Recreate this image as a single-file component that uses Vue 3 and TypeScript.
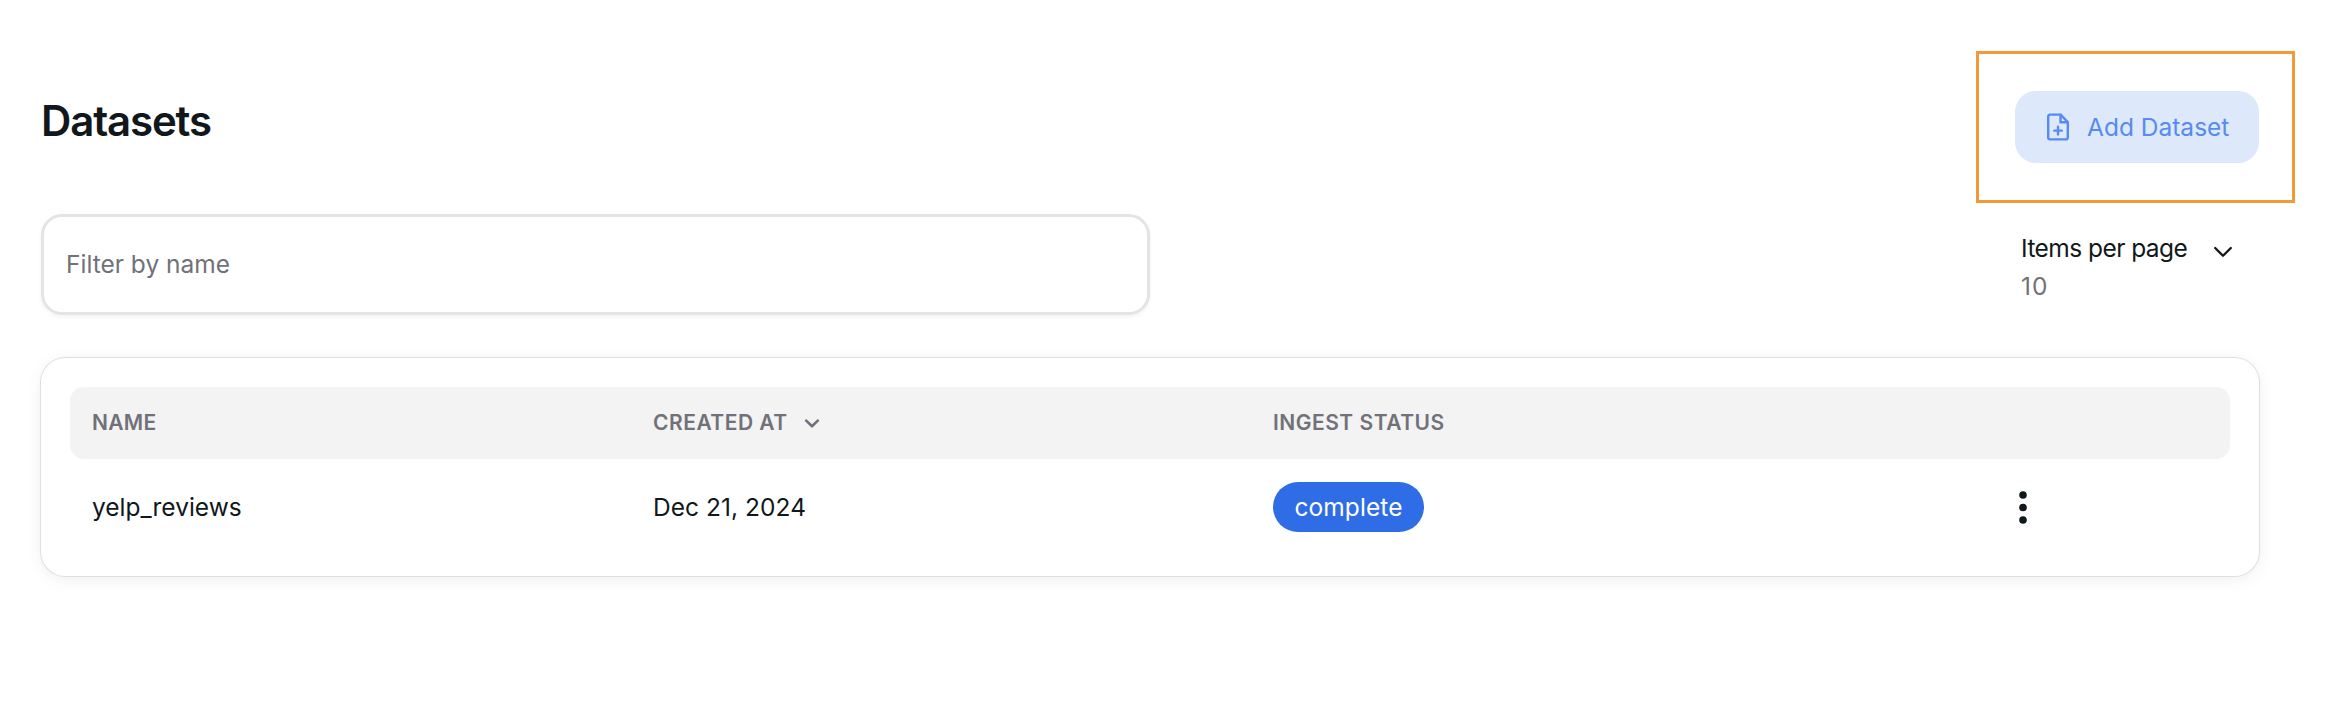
<script setup lang="ts">
import { ref } from 'vue'

interface Dataset {
  name: string
  createdAt: string
  status: string
}

const filter = ref('')
const perPage = ref(10)
const datasets: Dataset[] = [
  { name: 'yelp_reviews', createdAt: 'Dec 21, 2024', status: 'complete' },
]
</script>

<template>
  <main class="page">
    <header class="top">
      <h1 class="title">Datasets</h1>
      <div class="action">
        <button class="add" type="button">
          <svg class="add-icon" viewBox="0 0 24 28" fill="none" stroke="currentColor" stroke-width="2.4" stroke-linejoin="round" stroke-linecap="round">
            <path d="M4 1.6H14.5L21.8 9.2v15.4a1.8 1.8 0 0 1-1.8 1.8H4a1.8 1.8 0 0 1-1.8-1.8V3.4A1.8 1.8 0 0 1 4 1.6Z" />
            <path d="M14.5 1.6v7.6h7.3" />
            <path d="M12 13.8v7.6M8.2 17.6h7.6" />
          </svg>
          <span>Add Dataset</span>
        </button>
        <div class="highlight"></div>
      </div>
    </header>

    <div class="toolbar">
      <input v-model="filter" class="filter" type="text" placeholder="Filter by name" />
      <button class="per-page" type="button">
        <span class="per-page-text">
          <span class="label">Items per page</span>
          <span class="value">{{ perPage }}</span>
        </span>
        <svg class="chevron" viewBox="0 0 20 12" fill="none" stroke="currentColor" stroke-width="2.3" stroke-linecap="round" stroke-linejoin="round">
          <path d="M2.2 2 10 9.8 17.8 2" />
        </svg>
      </button>
    </div>

    <section class="card">
      <div class="row head">
        <span class="name">NAME</span>
        <span class="sortable">
          <span>CREATED AT</span>
          <svg class="sort" viewBox="0 0 16 12" fill="none" stroke="currentColor" stroke-width="2.6" stroke-linecap="round" stroke-linejoin="round">
            <path d="M2.2 4.6 8 10.2 13.8 4.6" />
          </svg>
        </span>
        <span>INGEST STATUS</span>
        <span></span>
      </div>
      <div v-for="item in datasets" :key="item.name" class="row body">
        <span>{{ item.name }}</span>
        <span class="date">{{ item.createdAt }}</span>
        <span><span class="chip">{{ item.status }}</span></span>
        <svg class="dots" viewBox="0 0 8 34" fill="currentColor">
          <circle cx="4" cy="5" r="3.8" />
          <circle cx="4" cy="17.5" r="3.8" />
          <circle cx="4" cy="30" r="3.8" />
        </svg>
      </div>
    </section>
  </main>
</template>

<style>
body {
  background: #fff;
}
</style>

<style scoped>
.page {
  box-sizing: border-box;
  height: 704px;
  padding: 91px 69px 0 41px;
  font-family: Inter, sans-serif;
  font-size: 24.5px;
  font-weight: 430;
  color: #11181c;
}

.top {
  display: flex;
  justify-content: space-between;
  align-items: flex-start;
  height: 123px;
}

.title {
  margin: 0;
  font-size: 42px;
  line-height: 60px;
  font-weight: 600;
  letter-spacing: -1.15px;
}

.action {
  position: relative;
}

.add {
  display: flex;
  align-items: center;
  gap: 17px;
  box-sizing: border-box;
  width: 244px;
  height: 72px;
  padding: 0 0 0 31px;
  border: 0;
  border-radius: 21px;
  background: #dde8fb;
  color: #588bef;
  font: inherit;
  white-space: nowrap;
}

.add-icon {
  width: 24px;
  height: 28px;
}

.highlight {
  position: absolute;
  inset: -40px -36px -40px -39px;
  border: 3px solid #f19a37;
  pointer-events: none;
}

.toolbar {
  display: flex;
  justify-content: space-between;
  height: 101px;
}

.filter {
  box-sizing: border-box;
  width: 1109px;
  height: 101px;
  padding: 0 22px 2px;
  border: 3px solid #e4e4e5;
  border-radius: 21px;
  outline: 0;
  box-shadow: 0 2px 4px rgba(0, 0, 0, 0.05);
  font: inherit;
  color: inherit;
}

.filter::placeholder {
  color: #71717a;
  opacity: 1;
}

.per-page {
  display: flex;
  align-items: flex-start;
  box-sizing: border-box;
  width: 238px;
  padding: 15px 0 0;
  border: 0;
  background: none;
  color: inherit;
  font: inherit;
  text-align: left;
}

.per-page-text {
  display: flex;
  flex-direction: column;
  width: 191.5px;
  line-height: 38px;
}

.label {
  letter-spacing: -0.55px;
}

.value {
  color: #71717a;
  letter-spacing: 1px;
}

.chevron {
  width: 20px;
  height: 12px;
  margin-top: 17px;
}

.card {
  box-sizing: border-box;
  height: 218px;
  margin-top: 43px;
  padding: 29px;
  border-radius: 24.5px;
  background: #fff;
  box-shadow:
    0 0 0 1px #dfdfe1,
    0 0 9px rgba(0, 0, 0, 0.02),
    0 3.5px 17.5px rgba(0, 0, 0, 0.06);
}

.row {
  display: grid;
  grid-template-columns: 561px 620px 745px 1fr;
  align-items: center;
  padding-left: 22px;
}

.head {
  box-sizing: border-box;
  height: 72px;
  padding-bottom: 2px;
  border-radius: 14px;
  background: #f3f3f3;
  color: #71717a;
  font-size: 21px;
  font-weight: 600;
  letter-spacing: 0.5px;
}

.name {
  letter-spacing: 0.3px;
}

.sortable {
  display: flex;
  align-items: center;
  gap: 16px;
}

.sort {
  width: 16px;
  height: 12px;
}

.body {
  height: 96px;
}

.date {
  letter-spacing: 0.05px;
}

.chip {
  display: flex;
  align-items: center;
  justify-content: center;
  width: 151px;
  height: 50px;
  border-radius: 25px;
  background: #2f6de6;
  color: #fff;
  letter-spacing: 0.1px;
}

.dots {
  width: 8px;
  height: 34px;
  margin-left: 0.5px;
}
</style>
